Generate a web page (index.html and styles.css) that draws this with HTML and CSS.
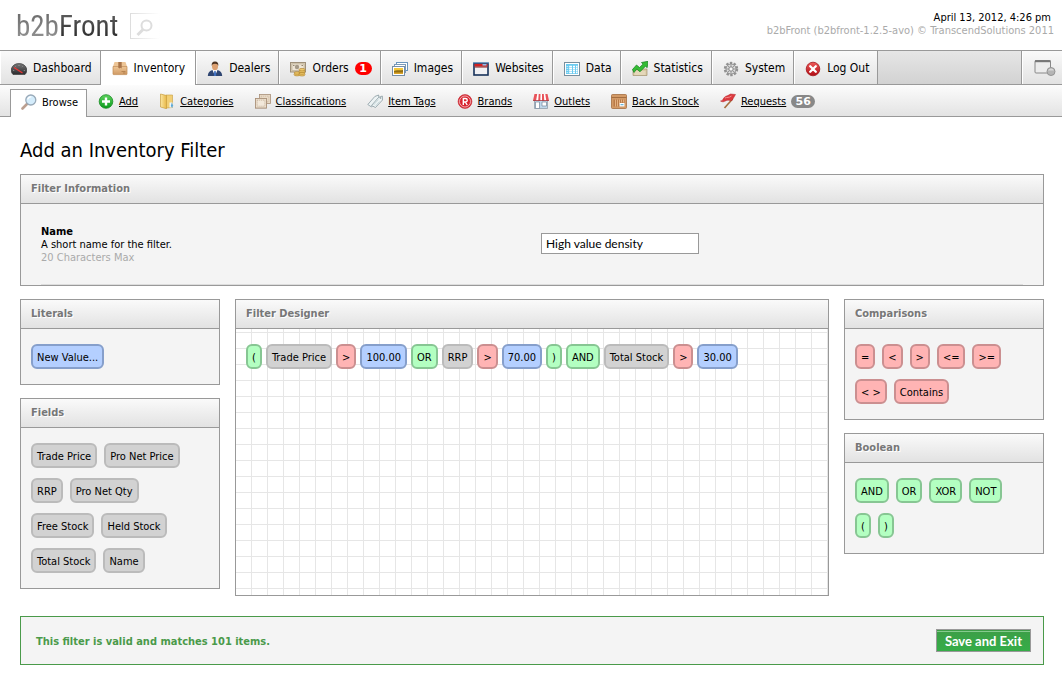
FILE: index.html
```html
<!DOCTYPE html>
<html lang="en">
<head>
<meta charset="utf-8">
<title>b2bFront - Add an Inventory Filter</title>
<link rel="stylesheet" href="styles.css">
</head>
<body>
<svg class="defs" width="0" height="0" aria-hidden="true">
  <defs>
    <linearGradient id="tan" x1="0" y1="0" x2="0" y2="1"><stop offset="0" stop-color="#efc796"/><stop offset="1" stop-color="#d09a64"/></linearGradient>
    <linearGradient id="green" x1="0" y1="0" x2="0" y2="1"><stop offset="0" stop-color="#5fd35f"/><stop offset="1" stop-color="#0a9a1c"/></linearGradient>
    <linearGradient id="red" x1="0" y1="0" x2="0" y2="1"><stop offset="0" stop-color="#ee5a5a"/><stop offset="1" stop-color="#b00c14"/></linearGradient>
    <linearGradient id="dark" x1="0" y1="0" x2="0" y2="1"><stop offset="0" stop-color="#777"/><stop offset="1" stop-color="#2c2c2e"/></linearGradient>
    <linearGradient id="yellow" x1="0" y1="0" x2="1" y2="0"><stop offset="0" stop-color="#fbe6a0"/><stop offset="1" stop-color="#e8b848"/></linearGradient>
  </defs>
</svg>

<header class="top">
  <div class="brand">
    <span class="logo"><span class="logo-light">b2b</span><span class="logo-dark">Front</span></span>
    <button class="search" type="button" aria-label="Search">
      <svg width="18" height="18" viewBox="0 0 18 18"><circle cx="10.500" cy="6.500" r="5" fill="#fff" stroke="#ddd" stroke-width="2"/><path d="M7 10.500 1.500 16" stroke="#ddd" stroke-width="3"/></svg>
    </button>
  </div>
  <div class="meta">
    <div class="date">April 13, 2012, 4:26 pm</div>
    <div class="version">b2bFront (b2bfront-1.2.5-avo) © TranscendSolutions 2011</div>
  </div>
</header>

<nav class="tabs">
  <a class="tab" href="#">
    <svg class="icon" viewBox="0 0 16 16"><path d="M2 13.500C.5 12 0 10 .2 8.300 1 4.500 4.200 2.500 8 2.500s7 2 7.800 5.800c.2 1.700-.3 3.700-1.800 5.200z" fill="url(#dark)" stroke="#333" stroke-width=".6"/><path d="M3 6.500 11.500 12" stroke="#e33" stroke-width="1.300"/><path d="M2.200 9.500h1M4.500 5.500l.6.600M8 4v1M11.500 5.500l-.6.600M13.800 9.500h-1" stroke="#aaa" stroke-width=".8"/></svg>
    Dashboard</a>
  <a class="tab active" href="#">
    <svg class="icon" viewBox="0 0 16 16"><path d="M2.500 1h11L15 5.500H1z" fill="#edc596"/><path d="M1 5.500h14V13a.6.600 0 0 1-.6.600H1.600A.6.600 0 0 1 1 13z" fill="url(#tan)" stroke="#c08a52" stroke-width=".7"/><path d="M6.300 1h3.400v6.500l-1.200-.8-1 .8-1.200-.8z" fill="#a9754a"/><path d="M9.500 10.500h4M11 12h2.500" stroke="#a87442" stroke-width=".7"/></svg>
    Inventory</a>
  <a class="tab" href="#">
    <svg class="icon" viewBox="0 0 16 16"><path d="M.8 15c0-3.500 2-5.500 4.700-6h5c2.700.5 4.700 2.500 4.700 6z" fill="#2f4672"/><path d="m5.500 9 2.500 6 2.500-6z" fill="#fff"/><path d="M7.300 10h1.400l.6 4.500-1.300.5-1.200-.5z" fill="#3e6fc0"/><ellipse cx="8" cy="5.200" rx="3" ry="4" fill="#dca071"/><path d="M4.800 5C4.200 2 5.500.4 8 .4S11.800 2 11.200 5c-.4-1.500-1-2.200-3.200-2.200S5.200 3.500 4.800 5z" fill="#4d3423"/></svg>
    Dealers</a>
  <a class="tab" href="#">
    <svg class="icon" viewBox="0 0 16 16"><rect x=".5" y="1.500" width="15" height="9.500" fill="#d9cdb6" stroke="#9f907a"/><rect x="2" y="3" width="12" height="6.500" fill="#eee5d5" stroke="#b7a990" stroke-width=".6"/><circle cx="7" cy="6" r="2.200" fill="#a69a88"/><path d="M3 4.500h1.500M11.500 4.500H13" stroke="#94866f"/><g fill="#efc96b" stroke="#aa7a24" stroke-width=".6"><ellipse cx="7" cy="13.700" rx="3" ry="1.200"/><ellipse cx="7" cy="12" rx="3" ry="1.200"/><ellipse cx="12" cy="13.700" rx="3" ry="1.300"/><ellipse cx="12" cy="12" rx="3" ry="1.300"/><ellipse cx="12" cy="10.300" rx="3" ry="1.300"/><ellipse cx="12" cy="8.700" rx="3" ry="1.300"/></g></svg>
    Orders <span class="badge badge-red">1</span></a>
  <a class="tab" href="#">
    <svg class="icon" viewBox="0 0 16 16"><rect x="4.500" y="1.500" width="11" height="8" fill="#fff" stroke="#6a95bd"/><path d="M6 3h8v3H6z" fill="#8ec1ee"/><path d="M6 6h8v2H6z" fill="#cfe0a0"/><rect x="2.500" y="3.500" width="11" height="8" fill="#fff" stroke="#7a9ab8"/><rect x=".5" y="5.500" width="12" height="9" fill="#fff" stroke="#778ea5"/><path d="M2 7h9v3H2z" fill="#f5c83a"/><path d="M2 10c3-1.500 5 0 9-1v4H2z" fill="#936f12"/><path d="M2 11.500h9V13H2z" fill="#dca62a"/></svg>
    Images</a>
  <a class="tab" href="#">
    <svg class="icon" viewBox="0 0 16 16"><rect x="1" y="2.500" width="14" height="11.500" fill="#f1f1f4" stroke="#17325b" stroke-width="1.600"/><path d="M1.500 2.800h13v2.700h-13z" fill="#d32020"/><path d="M1.800 6h12.400" stroke="#7c1414"/><path d="M9.500 3.800h4" stroke="#84d1ff" stroke-width="1.400"/><path d="M0 1.900h16" stroke="#4a88bd"/></svg>
    Websites</a>
  <a class="tab" href="#">
    <svg class="icon" viewBox="0 0 16 16"><rect x=".5" y="1.500" width="15" height="13" fill="#fff" stroke="#788f9e"/><path d="M2 3h12v10H2z" fill="#6bcbf0"/><path d="M5.200 5.500H8M9 5.500h2M12 5.500h1.500M5.200 7.500H8M9 7.500h2M12 7.500h1.500M5.200 9.500H8M9 9.500h2M12 9.500h1.500M5.200 11.500H8M9 11.500h2M12 11.500h1.500" stroke="#fff" stroke-width="1.300"/><path d="M2.500 5.500h1.700M2.500 7.500h1.700M2.500 9.500h1.700M2.500 11.500h1.700" stroke="#b8e8fa"/></svg>
    Data</a>
  <a class="tab" href="#">
    <svg class="icon" viewBox="0 0 16 16"><path d="M1 8h14v6.500H1z" fill="#d9c9a5" stroke="#a3936e" stroke-width=".7"/><path d="M2.500 11h11M2.500 13h11" stroke="#f0e6cd"/><path d="m.5 8.500 4-4.500 3 2.500 3.500-3.300L9.500 1.500 16 .3l-.8 6.400-1.700-1.500L8 10.800 4.800 8 2 11.500z" fill="#35bd35" stroke="#13801d" stroke-width=".7"/></svg>
    Statistics</a>
  <a class="tab" href="#">
    <svg class="icon" viewBox="0 0 16 16"><circle cx="8" cy="8" r="6" fill="none" stroke="#929292" stroke-width="2.400" stroke-dasharray="2.400 1.370"/><circle cx="8" cy="8" r="5" fill="#dedede" stroke="#8d8d8d"/><circle cx="8" cy="8" r="2.300" fill="none" stroke="#888"/><path d="M8 3.500v2M8 10.500v2M3.500 8h2M10.500 8h2M4.800 4.800l1.400 1.400M9.800 9.800l1.400 1.400M11.200 4.800 9.800 6.200M6.200 9.800l-1.400 1.400" stroke="#999"/><circle cx="8" cy="8" r="1" fill="#fff"/></svg>
    System</a>
  <a class="tab" href="#">
    <svg class="icon" viewBox="0 0 16 16"><circle cx="8" cy="8" r="6.800" fill="url(#red)" stroke="#a3161c" stroke-width=".8"/><path d="m5.200 5.200 5.600 5.600M10.800 5.200l-5.600 5.600" stroke="#fff" stroke-width="2.300" stroke-linecap="round"/></svg>
    Log Out</a>
  <a class="tab tab-window" href="#" aria-label="Window">
    <svg width="22" height="18" viewBox="0 0 22 18"><rect x="1" y="1.500" width="15.500" height="12.500" rx="1" fill="#ececec" stroke="#888"/><path d="M1 2.200h15.500" stroke="#777" stroke-width="2"/><circle cx="17" cy="12.500" r="4" fill="#b5b5b5" stroke="#949494"/><path d="M14 11.500a3.200 3.200 0 0 1 6 0z" fill="#d8d8d8"/></svg>
  </a>
</nav>

<nav class="subnav">
  <a class="sub current" href="#">
    <svg class="icon" viewBox="0 0 16 16"><path d="M6.500 9.500 1.500 14.500" stroke="#bb9f90" stroke-width="2.600" stroke-linecap="round"/><circle cx="9.800" cy="6" r="5" fill="#d4ecfb" stroke="#98a9b8" stroke-width="1.300"/><path d="M6.800 5.500a3 3 0 0 1 3.500-2.600" stroke="#fff" stroke-width="1.300" fill="none"/></svg>
    <span>Browse</span></a>
  <a class="sub" href="#">
    <svg class="icon" viewBox="0 0 16 16"><circle cx="8" cy="8.500" r="6.800" fill="url(#green)" stroke="#148a20" stroke-width=".8"/><path d="M8 4.500v8M4 8.500h8" stroke="#fff" stroke-width="2.400"/></svg>
    <span>Add</span></a>
  <a class="sub" href="#">
    <svg class="icon" viewBox="0 0 16 16"><path d="M7 2h6.500v12.500L7 15z" fill="#f2cf74" stroke="#c89d3f" stroke-width=".6"/><path d="M1.500 1 7.500 2.500v13.200L1.500 14z" fill="url(#yellow)" stroke="#c89d3f" stroke-width=".7"/><path d="M10.500 9.500h3v5h-3z" fill="#eef6fb"/><path d="m12.800 9.500 1.300 3-1 2.500-1.300-2z" fill="#5da9d8"/></svg>
    <span>Categories</span></a>
  <a class="sub" href="#">
    <svg class="icon" viewBox="0 0 16 16"><g fill="#e9dac6" stroke="#a88f78" stroke-width=".8"><rect x="4.500" y="1.500" width="11" height="9"/><rect x=".5" y="5.500" width="11" height="9.500"/></g><rect x="6.200" y="3.200" width="7.600" height="5.600" fill="none" stroke="#c3ad97" stroke-width=".7" stroke-dasharray="1 1"/><rect x=".5" y="5.500" width="11" height="9.500" fill="#ecdfcd" stroke="#a88f78" stroke-width=".8"/><rect x="2.200" y="7.200" width="7.600" height="6" fill="#f2e8da" stroke="#b9a28b" stroke-width=".7" stroke-dasharray="1 1"/></svg>
    <span>Classifications</span></a>
  <a class="sub" href="#">
    <svg class="icon" viewBox="0 0 16 16"><g fill="#edf3f4" stroke="#899ba1" stroke-width=".8"><path d="m.8 11.500 7-8 3.800-1.500.4 3.500-7.500 8.500z"/><path d="m4.500 12.500 7-8L15.300 3l.2 4-7 7.500z"/></g><circle cx="13.500" cy="5" r=".8" fill="#819297"/><path d="m6.500 12 5-5.500M8.500 13l4-4.500" stroke="#bdd0d4" stroke-width=".8"/></svg>
    <span>Item Tags</span></a>
  <a class="sub" href="#">
    <svg class="icon" viewBox="0 0 16 16"><circle cx="8" cy="8.500" r="6.900" fill="#d9333c" stroke="#c21d29" stroke-width=".6"/><circle cx="8" cy="8.500" r="5.500" fill="#d8232f" stroke="#f6c9cb" stroke-width=".8"/><path d="M6.300 12V5.500h2.200a1.700 1.700 0 0 1 0 3.500H6.300M8.300 9l1.900 3" fill="none" stroke="#fff" stroke-width="1.400"/></svg>
    <span>Brands</span></a>
  <a class="sub" href="#">
    <svg class="icon" viewBox="0 0 16 16"><path d="M1.500 7h13v8.500h-13z" fill="#bfd7ea" stroke="#8895a1" stroke-width=".7"/><path d="M2.500 9h4v6.500h-4zM9 9h4.500v4H9z" fill="#fff" stroke="#74869b" stroke-width=".7"/><path d="M1.500 1h13L16 7.500H0z" fill="#e8535a"/><path d="M4.200 1h1.500L5.200 8H3zM7.500 1H9v7H7.300zM10.800 1h1.500l1 7h-2z" fill="#fff"/><path d="M0 7.500h16" stroke="#a8343b" stroke-width=".8"/></svg>
    <span>Outlets</span></a>
  <a class="sub" href="#">
    <svg class="icon" viewBox="0 0 16 16"><rect x=".5" y="1.500" width="15" height="14" rx="1" fill="#d39a66" stroke="#a46d40" stroke-width=".8"/><path d="M.5 4.500h15" stroke="#a56d3f"/><rect x="2.500" y="6.500" width="11" height="7" fill="#b97a48"/><path d="M4.500 6.500v7M6.500 6.500v7M8.500 6.500v4M10.500 6.500v3M12.500 6.500v3" stroke="#e4b181"/><rect x="8.500" y="10" width="5" height="3.500" fill="#fff"/><path d="M9.500 11.700h3" stroke="#4ba6cf"/></svg>
    <span>Back In Stock</span></a>
  <a class="sub" href="#">
    <svg class="icon" viewBox="0 0 16 16"><path d="m12.500 6-8 9" stroke="#a66c3b" stroke-width="1.600"/><path d="M.5 8C3 8.500 3 4 6.500 3c2-.6 2.500-1.200 4-2l5 .5-3.500 6C9.500 8 9 6.500 6.500 7.500 4 8.500 3 9.500.5 8z" fill="#dc3a3f" stroke="#b3222b" stroke-width=".5"/><path d="M5 5c2-1 4 0 6.500-2" stroke="#f59090" fill="none"/></svg>
    <span>Requests</span> <span class="badge badge-gray">56</span></a>
</nav>

<main class="content">
  <h1>Add an Inventory Filter</h1>

  <section class="panel info">
    <h2>Filter Information</h2>
    <div class="info-body">
      <div class="field">
        <label for="name"><b>Name</b><span>A short name for the filter.</span><span class="hint">20 Characters Max</span></label>
        <input id="name" type="text" value="High value density">
      </div>
    </div>
  </section>

  <div class="columns">
    <div class="side">
      <section class="panel">
        <h2>Literals</h2>
        <div class="chips"><button class="chip blue" type="button">New Value...</button></div>
      </section>
      <section class="panel">
        <h2>Fields</h2>
        <div class="chips">
          <button class="chip" type="button">Trade Price</button>
          <button class="chip" type="button">Pro Net Price</button>
          <button class="chip" type="button">RRP</button>
          <button class="chip" type="button">Pro Net Qty</button>
          <button class="chip" type="button">Free Stock</button>
          <button class="chip" type="button">Held Stock</button>
          <button class="chip" type="button">Total Stock</button>
          <button class="chip" type="button">Name</button>
        </div>
      </section>
    </div>

    <section class="panel designer">
      <h2>Filter Designer</h2>
      <div class="chips canvas">
        <button class="chip green" type="button">(</button>
        <button class="chip" type="button">Trade Price</button>
        <button class="chip red" type="button">&gt;</button>
        <button class="chip blue" type="button">100.00</button>
        <button class="chip green" type="button">OR</button>
        <button class="chip" type="button">RRP</button>
        <button class="chip red" type="button">&gt;</button>
        <button class="chip blue" type="button">70.00</button>
        <button class="chip green" type="button">)</button>
        <button class="chip green" type="button">AND</button>
        <button class="chip" type="button">Total Stock</button>
        <button class="chip red" type="button">&gt;</button>
        <button class="chip blue" type="button">30.00</button>
      </div>
    </section>

    <div class="side">
      <section class="panel">
        <h2>Comparisons</h2>
        <div class="chips">
          <button class="chip red" type="button">=</button>
          <button class="chip red" type="button">&lt;</button>
          <button class="chip red" type="button">&gt;</button>
          <button class="chip red" type="button">&lt;=</button>
          <button class="chip red" type="button">&gt;=</button>
          <button class="chip red" type="button">&lt; &gt;</button>
          <button class="chip red" type="button">Contains</button>
        </div>
      </section>
      <section class="panel">
        <h2>Boolean</h2>
        <div class="chips">
          <button class="chip green" type="button">AND</button>
          <button class="chip green" type="button">OR</button>
          <button class="chip green" type="button">XOR</button>
          <button class="chip green" type="button">NOT</button>
          <button class="chip green" type="button">(</button>
          <button class="chip green" type="button">)</button>
        </div>
      </section>
    </div>
  </div>

  <div class="status">
    <p>This filter is valid and matches 101 items.</p>
    <button class="save" type="button">Save and Exit</button>
  </div>
</main>
</body>
</html>
```
FILE: styles.css
```css
* { box-sizing: border-box; }

body {
  margin: 0;
  background: #fff;
  color: #000;
  font: 11px/13px Tahoma, "DejaVu Sans Condensed", "DejaVu Sans", sans-serif;
}

button, input { font: inherit; color: inherit; }
a { color: inherit; }
.defs { display: block; }

.top {
  display: flex;
  justify-content: space-between;
  height: 50px;
  padding: 10px 8px 0 16px;
}
.brand { display: flex; gap: 12px; }
.logo {
  font: 29px/32px "Liberation Sans Narrow", "Roboto Condensed", "Open Sans Condensed", sans-serif;
}
.logo-light, .logo-dark {
  color: transparent;
  background-clip: text;
  -webkit-background-clip: text;
}
.logo-light { background-image: linear-gradient(#666, #999); }
.logo-dark { background-image: linear-gradient(#666, #222); }
.search {
  width: 30px;
  height: 26px;
  margin-top: 3px;
  padding: 4px 0 0 5px;
  border: 1px solid;
  border-image: linear-gradient(to right, #ddd, #fff) 1;
  background: #fff;
  text-align: left;
}
.search svg { display: block; }
.meta { text-align: right; }
.date { padding: 1px 3px 0 0; }
.version { color: #aaa; }

.tabs {
  display: flex;
  height: 35px;
  border-top: 1px solid #999;
  border-bottom: 1px solid #999;
  background: linear-gradient(#e6e6e6, #d2d2d2);
  font-size: 12px;
}
.tab {
  display: flex;
  align-items: center;
  gap: 6px;
  padding: 2px 8px 0 11px;
  border-right: 1px solid #999;
  background: linear-gradient(#fafafa, #e2e2e2);
  box-shadow: inset 1px 0 #fff;
  text-decoration: none;
  white-space: nowrap;
}
.tab.active { background: #fff; margin-bottom: -1px; padding: 1px 10px 0 11px; }
.tab-window {
  margin-left: auto;
  padding: 0 6px 0 12px;
  border-right: 0;
  border-left: 1px solid #999;
}
.icon { width: 16px; height: 16px; flex: none; }

.badge {
  border-radius: 8px;
  color: #fff;
  font: bold 11px/13px Verdana, "DejaVu Sans", sans-serif;
  text-align: center;
}
.badge-red { min-width: 17px; background: #f00; }
.badge-gray { min-width: 24px; background: #888; }

.subnav {
  display: flex;
  align-items: flex-end;
  gap: 21px;
  height: 32px;
  padding-left: 10px;
  border-bottom: 1px solid #999;
  background: linear-gradient(#fcfcfc, #e3e3e3);
  white-space: nowrap;
}
.sub {
  display: flex;
  align-items: center;
  gap: 5px;
  height: 28px;
  padding-bottom: 2px;
  text-decoration: none;
}
.sub span:not(.badge) { text-decoration: underline; }
.sub.current {
  height: 28px;
  margin: 0 -10px -1px 0;
  padding: 0 8px 3px 10px;
  border: 1px solid #999;
  border-bottom: 0;
  background: #fff;
}
.sub.current span { text-decoration: none; }

.content { padding: 21px 18px 14px 20px; }
h1 { margin: 0; font-size: 20px; line-height: 24px; font-weight: normal; }
h2 {
  margin: 0;
  height: 29px;
  padding: 0 10px;
  border-bottom: 1px solid #999;
  background: linear-gradient(#fafafa, #e2e2e2);
  color: #777;
  font-size: 11px;
  line-height: 28px;
  text-shadow: 1px 1px #fff;
}
.panel { border: 1px solid #999; background: #f4f4f4; }
.info { margin-top: 12px; }
.info-body { padding: 20px 20px 0; }
.field {
  display: flex;
  align-items: flex-start;
  height: 61px;
  border-bottom: 1px solid #ddd;
}
.field label { width: 500px; padding-top: 1px; }
.field label > * { display: block; }
.hint { color: #aaa; }
.field input {
  width: 158px;
  height: 21px;
  margin-top: 9px;
  padding: 0 4px;
  border: 1px solid #999;
  background: #fff;
  font-family: "Lato", sans-serif;
  font-size: 12px;
}

.columns { display: flex; gap: 15px; margin-top: 13px; }
.side {
  display: flex;
  flex-direction: column;
  gap: 13px;
  width: 200px;
  flex: none;
}
.designer {
  display: flex;
  flex-direction: column;
  flex: 1;
  min-height: 297px;
}
.chips {
  display: flex;
  flex-wrap: wrap;
  align-content: flex-start;
  gap: 10px 7px;
  padding: 15px 25px 15px 10px;
}
.canvas {
  flex: 1;
  column-gap: 4px;
  background-color: #fff;
  background-image:
    linear-gradient(to right, #e6e6e6 1px, transparent 1px),
    linear-gradient(#e6e6e6 1px, transparent 1px);
  background-size: 16px 16px;
  background-position: 15px 3px;
}
.chip {
  height: 25px;
  padding: 1px 4px 0;
  border: 2px solid #bbb;
  border-radius: 6px;
  background: #d2d2d2;
  white-space: nowrap;
}
.chip.blue { border-color: #869fcb; background: #b4cfff; }
.chip.green { border-color: #87c693; background: #b3ffc1; }
.chip.red { border-color: #cb8f90; background: #ffb4b4; }

.status {
  display: flex;
  align-items: center;
  justify-content: space-between;
  height: 49px;
  margin-top: 20px;
  padding: 0 12px 0 15px;
  border: 1px solid #4a9a4a;
  background: #f4f4f4;
}
.status p { margin: 0; padding-top: 2px; color: #4a9a4a; font-weight: bold; }
.save {
  height: 23px;
  padding: 1px 8px 0;
  border: 1px solid #999;
  background: linear-gradient(#3d9e47, #35ad48);
  box-shadow: inset 0 1px #3d9e47, inset 0 2px #86cb8e;
  color: #fff;
  font: bold 13px/19px "Lato", sans-serif;
}
```
